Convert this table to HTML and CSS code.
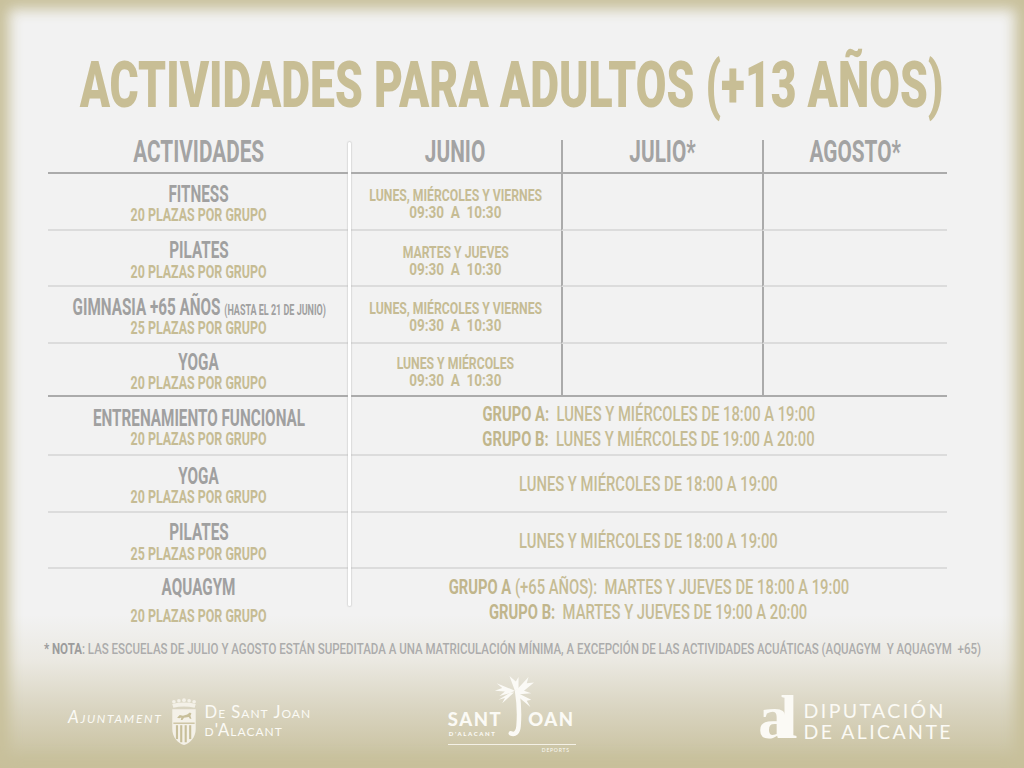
FILE: index.html
```html
<!DOCTYPE html>
<html lang="es">
<head>
<meta charset="utf-8">
<title>Actividades para adultos</title>
<link rel="stylesheet" href="styles.css">
</head>
<body>
<div class="page">
  <h1 class="title"><span class="cx sx-title">ACTIVIDADES PARA ADULTOS (+13 AÑOS)</span></h1>

  <div class="table">
    <div class="cell head"><span class="cx sx-head">ACTIVIDADES</span></div>
    <div class="cell head"><span class="cx sx-head">JUNIO</span></div>
    <div class="cell head sep"><span class="cx sx-head">JULIO*</span></div>
    <div class="cell head sep"><span class="cx sx-head">AGOSTO*</span></div>

    <div class="cell"><span class="cx name">FITNESS</span><span class="cx detail">20 PLAZAS POR GRUPO</span></div>
    <div class="cell junio"><span class="cx days">LUNES, MIÉRCOLES Y VIERNES</span><span class="cx hours">09:30&nbsp; A &nbsp;10:30</span></div>
    <div class="cell sep"></div>
    <div class="cell sep"></div>

    <div class="cell"><span class="cx name">PILATES</span><span class="cx detail">20 PLAZAS POR GRUPO</span></div>
    <div class="cell junio"><span class="cx days">MARTES Y JUEVES</span><span class="cx hours">09:30&nbsp; A &nbsp;10:30</span></div>
    <div class="cell sep"></div>
    <div class="cell sep"></div>

    <div class="cell"><span class="cx name">GIMNASIA +65 AÑOS <small class="hasta">(HASTA EL 21 DE JUNIO)</small></span><span class="cx detail">25 PLAZAS POR GRUPO</span></div>
    <div class="cell junio"><span class="cx days">LUNES, MIÉRCOLES Y VIERNES</span><span class="cx hours">09:30&nbsp; A &nbsp;10:30</span></div>
    <div class="cell sep"></div>
    <div class="cell sep"></div>

    <div class="cell strong"><span class="cx name">YOGA</span><span class="cx detail">20 PLAZAS POR GRUPO</span></div>
    <div class="cell junio strong"><span class="cx days">LUNES Y MIÉRCOLES</span><span class="cx hours">09:30&nbsp; A &nbsp;10:30</span></div>
    <div class="cell sep strong"></div>
    <div class="cell sep strong"></div>

    <div class="cell"><span class="cx name">ENTRENAMIENTO FUNCIONAL</span><span class="cx detail">20 PLAZAS POR GRUPO</span></div>
    <div class="cell wide merged"><span class="cx sched"><b>GRUPO A:</b>&nbsp; LUNES Y MIÉRCOLES DE 18:00 A 19:00</span><span class="cx sched"><b>GRUPO B:</b>&nbsp; LUNES Y MIÉRCOLES DE 19:00 A 20:00</span></div>

    <div class="cell"><span class="cx name">YOGA</span><span class="cx detail">20 PLAZAS POR GRUPO</span></div>
    <div class="cell wide merged"><span class="cx sched">LUNES Y MIÉRCOLES DE 18:00 A 19:00</span></div>

    <div class="cell"><span class="cx name">PILATES</span><span class="cx detail">25 PLAZAS POR GRUPO</span></div>
    <div class="cell wide merged"><span class="cx sched">LUNES Y MIÉRCOLES DE 18:00 A 19:00</span></div>

    <div class="cell last aqua"><span class="cx name">AQUAGYM</span><span class="cx detail">20 PLAZAS POR GRUPO</span></div>
    <div class="cell wide merged last"><span class="cx sched"><b>GRUPO A</b> (+65 AÑOS):&nbsp; MARTES Y JUEVES DE 18:00 A 19:00</span><span class="cx sched"><b>GRUPO B:</b>&nbsp; MARTES Y JUEVES DE 19:00 A 20:00</span></div>

    <div class="divider"></div>
  </div>

  <p class="nota"><span class="cx sx-nota"><b>* NOTA</b>: LAS ESCUELAS DE JULIO Y AGOSTO ESTÁN SUPEDITADA A UNA MATRICULACIÓN MÍNIMA, A EXCEPCIÓN DE LAS ACTIVIDADES ACUÁTICAS (AQUAGYM&nbsp; Y AQUAGYM&nbsp; +65)</span></p>

  <footer class="logos">
    <div class="ajunt">
      <span class="aj-word">Ajuntament</span>
      <svg class="shield" viewBox="0 0 28 46" width="28" height="46" aria-hidden="true">
        <g fill="#f4f1e8">
          <circle cx="4.5" cy="4.5" r="1.7"/><circle cx="9.2" cy="3.5" r="1.7"/><circle cx="14" cy="3" r="1.8"/><circle cx="18.8" cy="3.5" r="1.7"/><circle cx="23.5" cy="4.5" r="1.7"/>
          <path d="M3 6.5 Q14 4 25 6.5 L24 10 Q14 8 4 10 Z"/>
          <path d="M3 11.5 H25 V30 C25 38 19.5 43.5 14 45 C8.5 43.5 3 38 3 30 Z"/>
        </g>
        <g fill="#c8bf9a">
          <path d="M7.5 19.5 L10 17 L13 17.5 L17 16.5 L19.5 14.5 L21 15.5 L20 17.5 L21 20.5 L19.5 20.5 L18.5 18.8 L14 19.5 L12.5 21.5 L11 21.5 L11.5 19.2 L9.5 20 Z"/>
          <rect x="4" y="24" width="20" height="1.2"/>
          <rect x="6.4" y="26.5" width="2" height="13"/>
          <rect x="10.4" y="26.5" width="2" height="16"/>
          <rect x="14.6" y="26.5" width="2" height="16"/>
          <rect x="18.8" y="26.5" width="2" height="13"/>
        </g>
      </svg>
      <div class="aj-name">
        <span>De Sant Joan</span>
        <span>d'Alacant</span>
      </div>
    </div>

    <div class="sj">
      <div class="sj-row">
        <span class="sj-word">SANT</span>
        <svg class="palm" viewBox="0 0 44 70" width="40" height="66" aria-hidden="true">
          <g fill="#fbfaf6">
            <path d="M23 17 L3 9 L9 14 L1 17 L12 18 L6 23 L17 20 Z"/>
            <path d="M24 17 L38 2 L36 9 L44 8 L33 17 L41 20 L28 21 Z"/>
            <path d="M23 17 L17 1 L24 7 L27 2 L27 15 Z"/>
            <path d="M25 19 L41 27 L36 28 L40 35 L27 24 Z"/>
            <path d="M22 19 L9 31 L12 25 L5 27 L18 19 Z"/>
          </g>
          <path d="M25.5 18 C27.5 30 28 44 27 56 C26.5 63 23 66 18.5 64" fill="none" stroke="#fbfaf6" stroke-width="5" stroke-linecap="round"/>
        </svg>
        <span class="sj-word">OAN</span>
      </div>
      <span class="sj-small">D'ALACANT</span>
      <span class="sj-line"></span>
      <span class="sj-dep">DEPORTS</span>
    </div>

    <div class="dip">
      <span class="dip-mark">al</span>
      <div class="dip-name">
        <span>DIPUTACIÓN</span>
        <span>DE ALICANTE</span>
      </div>
    </div>
  </footer>
</div>
</body>
</html>
```

FILE: styles.css
```css
* { box-sizing: border-box; }

html, body {
  margin: 0;
  width: 1024px;
  height: 768px;
  overflow: hidden;
}

body {
  font-family: Roboto, "Liberation Sans", sans-serif;
  background: #f2f2f2;
}

.page {
  position: relative;
  width: 1024px;
  height: 768px;
  display: flex;
  flex-direction: column;
  background: linear-gradient(to bottom, #f2f2f2 0, #f2f2f2 615px, #ebe9e2 660px, #d9d4c0 710px, #c6be99 768px);
  box-shadow: inset 0 0 14px 9px #c8c09b;
}

.cx {
  display: inline-block;
  white-space: nowrap;
}

/* title */
.title {
  margin: 0;
  height: 140px;
  padding-top: 30px;
  display: flex;
  justify-content: center;
  align-items: center;
  font-size: 65px;
  line-height: 1;
  font-weight: 900;
  color: #c8be95;
}
.sx-title { transform: scaleX(.685); }

/* table */
.table {
  position: relative;
  margin-left: 48px;
  width: 899px;
  display: grid;
  grid-template-columns: 302px 211px 201px 185px;
  grid-template-rows: 34px 57px 56px 57px 53px 59px 57px 56px 59px;
}

.cell {
  display: flex;
  flex-direction: column;
  align-items: center;
  justify-content: center;
  border-bottom: 2px solid #dcdcdc;
  padding-top: 3px;
  font-weight: 700;
}

.head {
  border-bottom-color: #ababab;
  padding-top: 0;
  padding-bottom: 10px;
  font-size: 31px;
  line-height: 1;
  color: #a3a3a3;
}
.sx-head { transform: scaleX(.67); }

.sep { border-left: 2px solid #ababab; }
.strong { border-bottom-color: #ababab; }
.last { border-bottom: none; }
.wide { grid-column: span 3; }

.name {
  font-size: 24.6px;
  line-height: 1;
  color: #a0a0a0;
  transform: scaleX(.62);
}
.hasta {
  font-size: 14.5px;
}
.detail {
  font-size: 18px;
  line-height: 1;
  color: #c6bc94;
  transform: scaleX(.69);
}
.aqua .name { margin-bottom: 7px; }

.junio { padding-top: 5px; }
.days, .hours {
  font-size: 16.5px;
  line-height: 17px;
  color: #c6bc94;
}
.days { transform: scaleX(.74); }
.hours { transform: scaleX(.82); }

.merged { padding-top: 2px; }
.sched {
  font-size: 19.7px;
  line-height: 25px;
  font-weight: 500;
  color: #c6bc94;
  transform: scaleX(.75);
}
.sched b { font-weight: 700; color: #c1b68c; }

.divider {
  position: absolute;
  left: 300px;
  top: 2px;
  width: 3px;
  height: 464px;
  background: #ffffff;
  border-radius: 2px;
  box-shadow: 0 0 1px 1px rgba(180, 180, 180, .35);
}

/* nota */
.nota {
  margin: 12px 0 0;
  height: 20px;
  display: flex;
  justify-content: center;
  align-items: center;
  font-size: 15.5px;
  line-height: 1;
  font-weight: 500;
  color: #acacac;
}
.sx-nota { transform: scaleX(.742); }
.nota b { font-weight: 700; color: #9c9c9c; }

/* logos */
.logos {
  flex: 1;
  display: flex;
  align-items: center;
  justify-content: space-between;
  padding: 14px 71px 0 68px;
  color: #fbfaf5;
}

.ajunt {
  display: flex;
  align-items: center;
  gap: 6px;
}
.aj-word {
  font-family: Lato, "Open Sans", sans-serif;
  font-style: italic;
  font-variant: small-caps;
  font-size: 17px;
  letter-spacing: 1.7px;
  margin-top: -10px;
}
.shield {
  display: block;
  width: 30px;
  height: 49px;
}
.aj-name {
  display: flex;
  flex-direction: column;
  font-family: Lato, "Open Sans", sans-serif;
  font-variant: small-caps;
  font-size: 16.6px;
  line-height: 18px;
  letter-spacing: 1px;
}

.sj {
  display: flex;
  flex-direction: column;
  width: 128px;
  margin-top: -16px;
  margin-right: 46px;
}
.sj-row {
  display: flex;
  align-items: flex-end;
}
.sj-word {
  font-family: Lato, "Open Sans", sans-serif;
  font-weight: 900;
  font-size: 18.5px;
  line-height: 1;
  letter-spacing: 1.5px;
  margin-bottom: 11px;
}
.palm {
  display: block;
  margin: 0 -6px 0 -8px;
}
.sj-small {
  font-family: Lato, "Open Sans", sans-serif;
  font-weight: 900;
  font-size: 6px;
  line-height: 1;
  letter-spacing: 1.6px;
  margin-top: -9px;
  margin-left: 1px;
}
.sj-line {
  display: block;
  height: 1px;
  background: #f4f1e6;
  margin-top: 7px;
}
.sj-dep {
  font-family: Lato, "Open Sans", sans-serif;
  font-size: 5px;
  line-height: 1;
  letter-spacing: .8px;
  margin-top: 3px;
  align-self: flex-end;
  margin-right: 6px;
}

.dip {
  display: flex;
  align-items: center;
  gap: 6px;
}
.dip-mark {
  font-family: "Liberation Serif", "DejaVu Serif", serif;
  font-weight: 700;
  font-size: 62px;
  line-height: 1;
  letter-spacing: -9px;
  padding-right: 9px;
  margin-top: -8px;
}
.dip-name {
  display: flex;
  flex-direction: column;
  font-family: Lato, "Open Sans", sans-serif;
  font-size: 19.5px;
  line-height: 21px;
  letter-spacing: 2.4px;
}
```
